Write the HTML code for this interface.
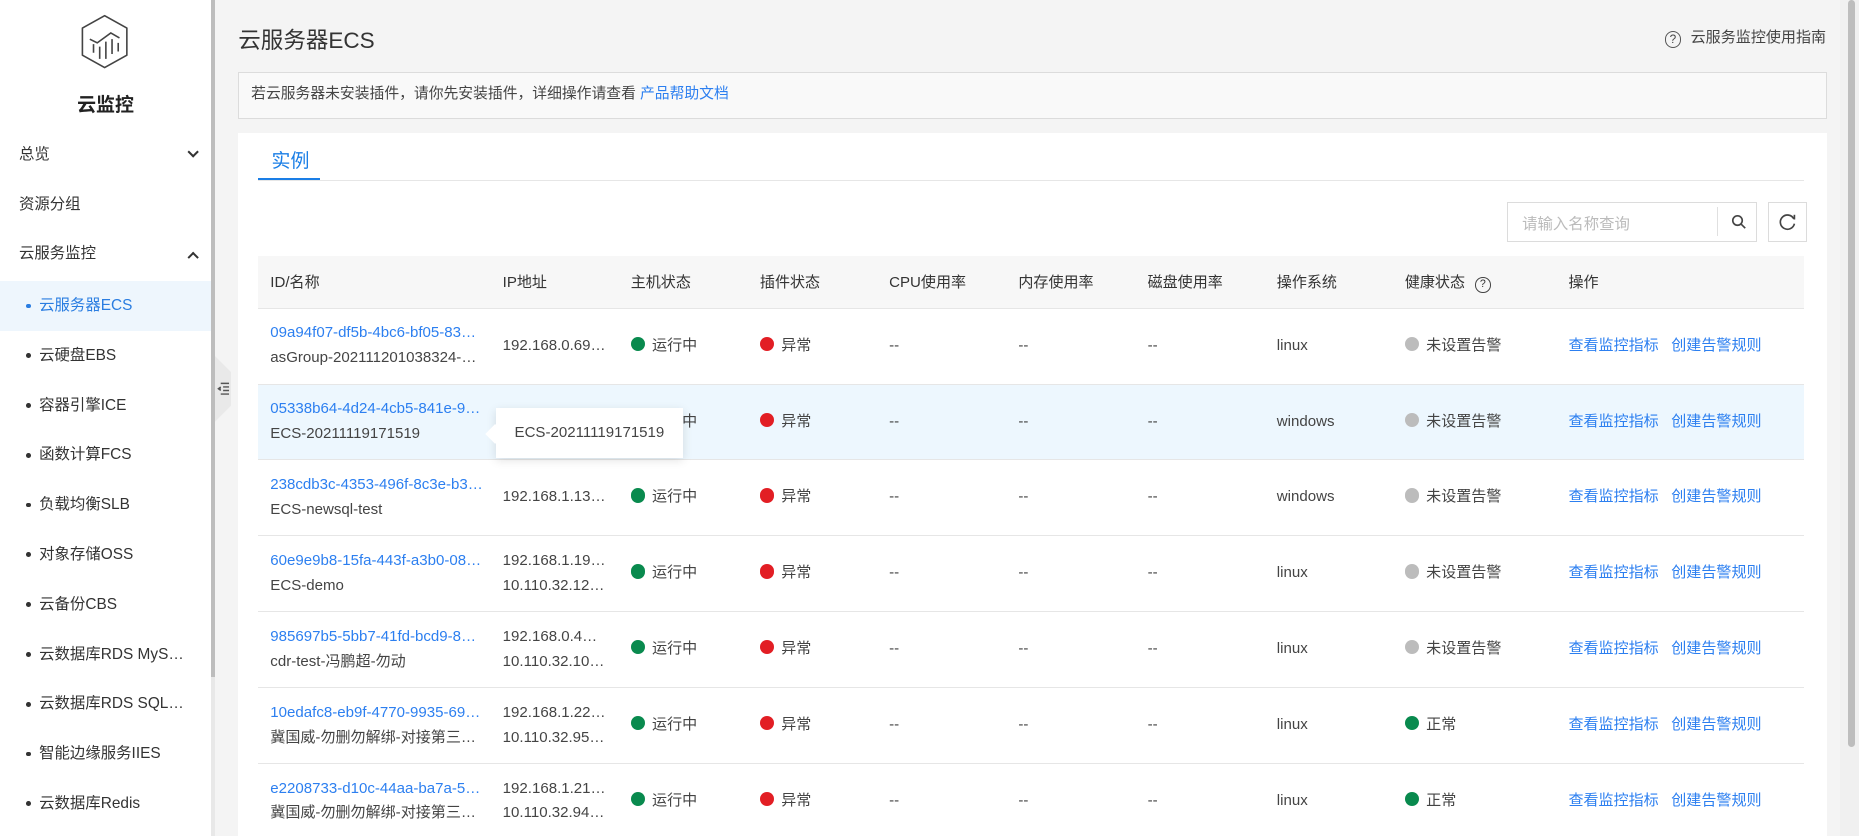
<!DOCTYPE html>
<html><head><meta charset="utf-8"><style>
*{box-sizing:border-box;margin:0;padding:0}
html,body{width:1859px;height:836px;overflow:hidden;background:#f4f4f4}
#root{zoom:1.18559;width:1568px;height:705px;position:relative;font-family:"Liberation Sans","Noto Sans CJK SC",sans-serif;color:#333;font-size:13px}
.abs{position:absolute}
#side{left:0;top:0;width:178px;height:705px;background:#fff}
#sbar{left:178px;top:0;width:3px;height:571px;background:#bdbdbd}
#sbar2{left:178px;top:571px;width:3px;height:134px;background:#e8e8e8}
.mi{position:absolute;left:16px;font-size:13px;color:#333;line-height:16px}
.chev{position:absolute;left:158px;width:7px;height:7px;border-right:2px solid #333;border-bottom:2px solid #333}
.sub{position:absolute;left:0;width:178px;height:42px;line-height:42px;font-size:13px;color:#333;padding-left:33px}
.sub:before{content:"";position:absolute;left:22px;top:19px;width:4px;height:4px;border-radius:50%;background:#333}
.sub.act{background:#eef6fd;color:#2a7de1}
.sub.act:before{background:#2a7de1}
.link{color:#2c7ff0}
table{border-collapse:collapse;position:absolute;left:218px;top:216px;width:1304px;table-layout:fixed}
th{height:44px;background:#f7f7f7;font-weight:normal;text-align:left;font-size:12.7px;color:#333;border-bottom:1px solid #e6e6e6;padding-left:10px}
td{height:64px;border-bottom:1px solid #e6e6e6;padding-left:10px;font-size:12.7px;color:#444;white-space:nowrap;overflow:hidden;line-height:21px}
tr.hl td{background:#edf7fe}
.dot{display:inline-block;width:12px;height:12px;border-radius:50%;vertical-align:-1px;margin-right:6px}
.g{background:#098a4e}.r{background:#e21e24}.n{background:#bcbcbc}
</style></head><body><div id="root">
<div id="side" class="abs">
<svg class="abs" style="left:63px;top:10px" width="50" height="50" viewBox="0 0 48 48" fill="none" stroke="#444" stroke-width="1.3"><path d="M24 3 L42 13 V35 L24 45 L6 35 V13 Z" stroke-linejoin="round"/><path d="M12 22 L18 25 L29 17 L36 21"/><path d="M15 26v7M20 28v10M25 24v14M30 22v12M35 25v7"/></svg>
<div class="abs" style="left:0;width:178px;top:76px;text-align:center;font-size:16px;font-weight:bold;color:#222">云监控</div>
<div class="mi" style="top:123px">总览</div><div class="chev" style="top:125px;left:159px;transform:rotate(45deg)"></div>
<div class="mi" style="top:165px">资源分组</div>
<div class="mi" style="top:207px">云服务监控</div><div class="chev" style="top:213px;left:159px;transform:rotate(-135deg)"></div>
<div class="sub act" style="top:237px">云服务器ECS</div>
<div class="sub" style="top:279px">云硬盘EBS</div>
<div class="sub" style="top:321px">容器引擎ICE</div>
<div class="sub" style="top:363px">函数计算FCS</div>
<div class="sub" style="top:405px">负载均衡SLB</div>
<div class="sub" style="top:447px">对象存储OSS</div>
<div class="sub" style="top:489px">云备份CBS</div>
<div class="sub" style="top:531px">云数据库RDS MyS…</div>
<div class="sub" style="top:573px">云数据库RDS SQL…</div>
<div class="sub" style="top:615px">智能边缘服务IIES</div>
<div class="sub" style="top:657px">云数据库Redis</div>
</div>
<div id="sbar" class="abs"></div><div id="sbar2" class="abs"></div>
<div class="abs" style="left:181px;top:300px;width:14px;height:56px;background:#e9e9e9;clip-path:polygon(0 0,100% 25%,100% 75%,0 100%)"></div>
<svg class="abs" style="left:182px;top:321px" width="12" height="12" viewBox="0 0 12 12" fill="none" stroke="#555" stroke-width="1.2"><path d="M4 2h7M6 5h5M6 8h5M4 11h7"/><path d="M4 5L2 6.5 4 8" fill="#555"/></svg>
<div class="abs" style="left:1552px;top:0;width:16px;height:705px;background:#f0f0f0"></div>
<div class="abs" style="left:1559px;top:0;width:6px;height:630px;background:#bdbdbd;border-radius:3px"></div>

<div class="abs" style="left:201px;top:19px;font-size:19px;color:#333">云服务器ECS</div>
<div class="abs" style="left:1404px;top:22px;font-size:12.7px;color:#444"><span style="display:inline-block;width:14px;height:14px;border:1px solid #555;border-radius:50%;font-size:10px;text-align:center;line-height:12px;margin-right:8px;vertical-align:-1px">?</span>云服务监控使用指南</div>
<div class="abs" style="left:201px;top:61px;width:1340px;height:39px;background:#f9f9f9;border:1px solid #dcdcdc;padding-left:10px;line-height:37px;font-size:12.5px;color:#444">若云服务器未安装插件，请你先安装插件，详细操作请查看 <span class="link">产品帮助文档</span></div>
<div class="abs" style="left:201px;top:112px;width:1340px;height:600px;background:#fff"></div>
<div class="abs" style="left:229px;top:123px;font-size:16px;color:#1a7ee6">实例</div>
<div class="abs" style="left:218px;top:152px;width:1304px;height:1px;background:#e6e6e6"></div>
<div class="abs" style="left:218px;top:150px;width:52px;height:2px;background:#1a7ee6"></div>
<div class="abs" style="left:1271px;top:170px;width:211px;height:34px;border:1px solid #dcdcdc;background:#fff"><span class="abs" style="left:12px;top:8px;color:#bbb;font-size:13px">请输入名称查询</span><span class="abs" style="left:176px;top:4px;width:1px;height:24px;background:#e0e0e0"></span>
<svg class="abs" style="left:188px;top:10px" width="13" height="13" viewBox="0 0 13 13" fill="none" stroke="#444" stroke-width="1.4"><circle cx="5.5" cy="5.5" r="4"/><path d="M8.5 8.5l3.5 3.5"/></svg></div>
<div class="abs" style="left:1491px;top:170px;width:33px;height:34px;border:1px solid #dcdcdc;background:#fff"><svg class="abs" style="left:9px;top:9px" width="15" height="15" viewBox="0 0 15 15" fill="none" stroke="#444" stroke-width="1.4"><path d="M12.5 5A6 6 0 1 0 13 9"/><path d="M13 1.5V5.5"/></svg></div>

<table>
<colgroup><col style="width:196px"><col style="width:108px"><col style="width:109px"><col style="width:109px"><col style="width:109px"><col style="width:109px"><col style="width:109px"><col style="width:108px"><col style="width:138px"><col></colgroup>
<tr><th>ID/名称</th><th>IP地址</th><th>主机状态</th><th>插件状态</th><th>CPU使用率</th><th>内存使用率</th><th>磁盘使用率</th><th>操作系统</th><th>健康状态 <span style="display:inline-block;width:13px;height:13px;border:1px solid #444;border-radius:50%;font-size:9px;text-align:center;line-height:11px;margin-left:5px;vertical-align:0">?</span></th><th>操作</th></tr>
<tr><td><span class="link">09a94f07-df5b-4bc6-bf05-83…</span><br>asGroup-202111201038324-…</td><td>192.168.0.69…</td><td><span class="dot g"></span>运行中</td><td><span class="dot r"></span>异常</td><td>--</td><td>--</td><td>--</td><td>linux</td><td><span class="dot n"></span>未设置告警</td><td><span class="link">查看监控指标</span>&nbsp;&nbsp;&nbsp;<span class="link">创建告警规则</span></td></tr>
<tr class="hl"><td><span class="link">05338b64-4d24-4cb5-841e-9…</span><br>ECS-20211119171519</td><td></td><td><span class="dot g"></span>运行中</td><td><span class="dot r"></span>异常</td><td>--</td><td>--</td><td>--</td><td>windows</td><td><span class="dot n"></span>未设置告警</td><td><span class="link">查看监控指标</span>&nbsp;&nbsp;&nbsp;<span class="link">创建告警规则</span></td></tr>
<tr><td><span class="link">238cdb3c-4353-496f-8c3e-b3…</span><br>ECS-newsql-test</td><td>192.168.1.13…</td><td><span class="dot g"></span>运行中</td><td><span class="dot r"></span>异常</td><td>--</td><td>--</td><td>--</td><td>windows</td><td><span class="dot n"></span>未设置告警</td><td><span class="link">查看监控指标</span>&nbsp;&nbsp;&nbsp;<span class="link">创建告警规则</span></td></tr>
<tr><td><span class="link">60e9e9b8-15fa-443f-a3b0-08…</span><br>ECS-demo</td><td>192.168.1.19…<br>10.110.32.12…</td><td><span class="dot g"></span>运行中</td><td><span class="dot r"></span>异常</td><td>--</td><td>--</td><td>--</td><td>linux</td><td><span class="dot n"></span>未设置告警</td><td><span class="link">查看监控指标</span>&nbsp;&nbsp;&nbsp;<span class="link">创建告警规则</span></td></tr>
<tr><td><span class="link">985697b5-5bb7-41fd-bcd9-8…</span><br>cdr-test-冯鹏超-勿动</td><td>192.168.0.4…<br>10.110.32.10…</td><td><span class="dot g"></span>运行中</td><td><span class="dot r"></span>异常</td><td>--</td><td>--</td><td>--</td><td>linux</td><td><span class="dot n"></span>未设置告警</td><td><span class="link">查看监控指标</span>&nbsp;&nbsp;&nbsp;<span class="link">创建告警规则</span></td></tr>
<tr><td><span class="link">10edafc8-eb9f-4770-9935-69…</span><br>冀国威-勿删勿解绑-对接第三…</td><td>192.168.1.22…<br>10.110.32.95…</td><td><span class="dot g"></span>运行中</td><td><span class="dot r"></span>异常</td><td>--</td><td>--</td><td>--</td><td>linux</td><td><span class="dot g"></span>正常</td><td><span class="link">查看监控指标</span>&nbsp;&nbsp;&nbsp;<span class="link">创建告警规则</span></td></tr>
<tr><td><span class="link">e2208733-d10c-44aa-ba7a-5…</span><br>冀国威-勿删勿解绑-对接第三…</td><td>192.168.1.21…<br>10.110.32.94…</td><td><span class="dot g"></span>运行中</td><td><span class="dot r"></span>异常</td><td>--</td><td>--</td><td>--</td><td>linux</td><td><span class="dot g"></span>正常</td><td><span class="link">查看监控指标</span>&nbsp;&nbsp;&nbsp;<span class="link">创建告警规则</span></td></tr>
</table>
<div class="abs" style="left:418px;top:344px;width:158px;height:42px;background:#fff;box-shadow:0 2px 8px rgba(0,0,0,.12);line-height:42px;padding-left:16px;color:#444;font-size:12.7px">ECS-20211119171519</div>
<div class="abs" style="left:412px;top:360px;width:12px;height:12px;background:#fff;transform:rotate(45deg)"></div>
</div></body></html>
